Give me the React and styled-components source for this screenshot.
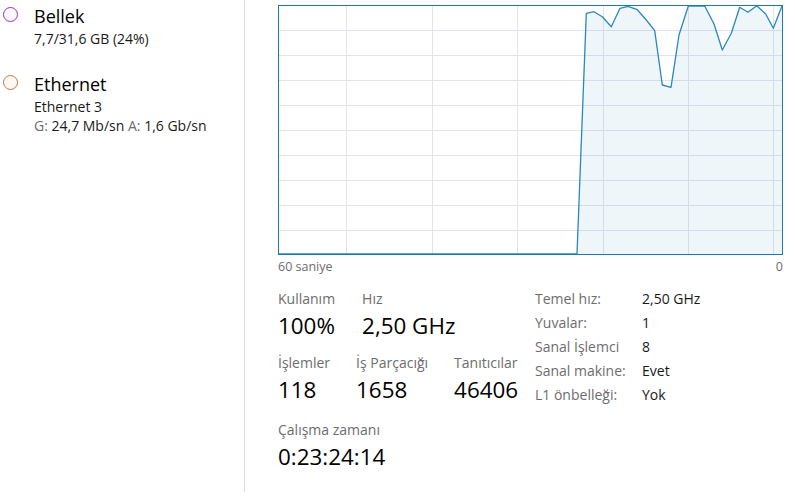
import React from "react";
import styled, { createGlobalStyle } from "styled-components";

const Global = createGlobalStyle`
  html, body { margin: 0; padding: 0; background: #ffffff; }
  body { font-family: "Open Sans", "Noto Sans", "Liberation Sans", sans-serif; color: #000; }
`;

const Page = styled.div`
  display: flex;
  width: 795px;
  height: 498px;
  overflow: hidden;
  background: #fff;
`;

const Sidebar = styled.div`
  width: 245px;
  height: 492px;
  border-right: 1px solid #dcdcdc;
  display: flex;
  flex-direction: column;
  gap: 24px;
  padding-top: 4px;
  box-sizing: border-box;
  flex-shrink: 0;
`;

const Item = styled.div`
  display: grid;
  grid-template-columns: 34px 1fr;
`;

const Ring = styled.span`
  display: block;
  width: 15px;
  height: 15px;
  box-sizing: border-box;
  margin: 3px 0 0 3px;
  border-radius: 50%;
  border: 1.5px solid ${(p) => p.$color};
  background: ${(p) => p.$fill};
`;

const ItemTitle = styled.div`
  font-size: 18px;
  line-height: 24px;
  color: #000;
`;

const ItemSub = styled.div`
  font-size: 14px;
  line-height: 19px;
  margin-top: ${(p) => (p.$first ? "1px" : "0")};
  color: #1a1a1a;
`;

const Dim = styled.span`
  color: #6d6d6d;
`;

const Main = styled.div`
  padding: 5px 0 0 33px;
  display: flex;
  flex-direction: column;
`;

const Chart = styled.svg`
  display: block;
`;

const Axis = styled.div`
  width: 505px;
  display: flex;
  justify-content: space-between;
  margin-top: 4px;
  font-size: 12.5px;
  line-height: 16px;
  color: #6d6d6d;
`;

const Stats = styled.div`
  display: flex;
  margin-top: 12px;
`;

const LeftStats = styled.div`
  width: 257px;
  padding-top: 3px;
  display: flex;
  flex-direction: column;
`;

const StatRow = styled.div`
  display: flex;
  gap: ${(p) => p.$gap || 25}px;
  margin-top: ${(p) => p.$mt || 0}px;
`;

const Stat = styled.div`
  display: flex;
  flex-direction: column;
`;

const Label = styled.div`
  font-size: 14px;
  line-height: 18px;
  color: #6d6d6d;
  white-space: nowrap;
`;

const Value = styled.div`
  font-size: 22.4px;
  line-height: 30px;
  margin-top: 3px;
  color: #000;
  white-space: nowrap;
`;

const InfoGrid = styled.div`
  display: grid;
  grid-template-columns: 107px auto;
  grid-auto-rows: 24px;
  align-items: center;
  font-size: 14px;
  line-height: 18px;
`;

const InfoKey = styled.div`
  color: #6d6d6d;
  white-space: nowrap;
`;

const InfoVal = styled.div`
  color: #1a1a1a;
  white-space: nowrap;
`;

const W = 505;
const H = 250;
const vLines = [68, 154, 239, 325, 410, 495];
const hLines = [25, 50, 75, 100, 125, 150, 175, 200, 225];
const pts = [
  [0, 249], [299, 249], [308.3, 8.3], [316, 6.7], [324.3, 11.7], [333.3, 21.7],
  [342, 3.3], [350, 1.3], [359.3, 4.7], [368.3, 15], [376.7, 25.7], [384.3, 80],
  [393, 82.3], [401, 30], [410.3, 1], [418.7, 1], [426.7, 1], [436, 19],
  [444.3, 45], [453.3, 28.3], [461.7, 2.3], [470, 7.3], [478.7, 0.7], [487.7, 9],
  [495.3, 23.3], [504, 1],
];

function CpuChart() {
  const line = pts.map((p) => p.join(",")).join(" ");
  const area = `${line} 504,249 0,249`;
  return (
    <Chart width={W} height={H} viewBox={`0 0 ${W} ${H}`}>
      {hLines.map((y) => (
        <line key={"h" + y} x1="0" x2={W} y1={y + 0.5} y2={y + 0.5} stroke="#e1e4ea" strokeWidth="1" />
      ))}
      {vLines.map((x) => (
        <line key={"v" + x} x1={x + 0.5} x2={x + 0.5} y1="0" y2={H} stroke="#e1e4ea" strokeWidth="1" />
      ))}
      <polygon points={area} fill="rgba(17,125,187,0.07)" />
      <polyline points={line} fill="none" stroke="#2c87bd" strokeWidth="1.3" strokeLinejoin="round" />
      <rect x="0.5" y="0.5" width={W - 1} height={H - 1} fill="none" stroke="#1b7aa8" strokeWidth="1" />
    </Chart>
  );
}

export default function App() {
  return (
    <Page>
      <Global />
      <Sidebar>
        <Item>
          <Ring $color="#9b2fb8" $fill="#fcf7fd" />
          <div>
            <ItemTitle>Bellek</ItemTitle>
            <ItemSub $first>7,7/31,6 GB (24%)</ItemSub>
          </div>
        </Item>
        <Item>
          <Ring $color="#c07a3c" $fill="#fdf8f3" />
          <div>
            <ItemTitle>Ethernet</ItemTitle>
            <ItemSub $first>Ethernet 3</ItemSub>
            <ItemSub>
              <Dim>G:</Dim> 24,7 Mb/sn <Dim>A:</Dim> 1,6 Gb/sn
            </ItemSub>
          </div>
        </Item>
      </Sidebar>
      <Main>
        <CpuChart />
        <Axis>
          <span>60 saniye</span>
          <span>0</span>
        </Axis>
        <Stats>
          <LeftStats>
            <StatRow $gap={27}>
              <Stat>
                <Label>Kullanım</Label>
                <Value>100%</Value>
              </Stat>
              <Stat>
                <Label>Hız</Label>
                <Value>2,50 GHz</Value>
              </Stat>
            </StatRow>
            <StatRow $mt={13} $gap={26}>
              <Stat>
                <Label>İşlemler</Label>
                <Value>118</Value>
              </Stat>
              <Stat>
                <Label>İş Parçacığı</Label>
                <Value>1658</Value>
              </Stat>
              <Stat>
                <Label>Tanıtıcılar</Label>
                <Value>46406</Value>
              </Stat>
            </StatRow>
            <StatRow $mt={16}>
              <Stat>
                <Label>Çalışma zamanı</Label>
                <Value>0:23:24:14</Value>
              </Stat>
            </StatRow>
          </LeftStats>
          <InfoGrid>
            <InfoKey>Temel hız:</InfoKey>
            <InfoVal>2,50 GHz</InfoVal>
            <InfoKey>Yuvalar:</InfoKey>
            <InfoVal>1</InfoVal>
            <InfoKey>Sanal İşlemci</InfoKey>
            <InfoVal>8</InfoVal>
            <InfoKey>Sanal makine:</InfoKey>
            <InfoVal>Evet</InfoVal>
            <InfoKey>L1 önbelleği:</InfoKey>
            <InfoVal>Yok</InfoVal>
          </InfoGrid>
        </Stats>
      </Main>
    </Page>
  );
}
